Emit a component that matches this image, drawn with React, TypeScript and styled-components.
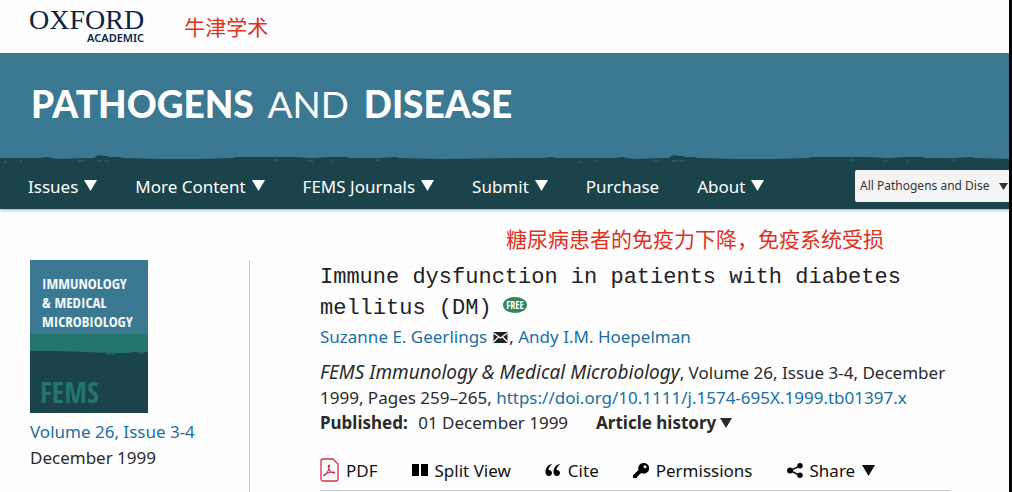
import React from 'react';
import styled, { createGlobalStyle } from 'styled-components';

const Global = createGlobalStyle`
  *, *::before, *::after { box-sizing: border-box; }
  html { background: #000; }
  body {
    margin: 0 3px 0 0;
    background: #fff;
    color: #2a2a2a;
    font-family: "Noto Sans", "Noto Sans CJK SC", sans-serif;
    font-size: 17px;
    line-height: 25px;
    overflow-x: hidden;
  }
  #root { min-height: 100vh; background: #fefefe; }
  a { color: #1a6f9f; text-decoration: none; }
  button { font: inherit; color: inherit; background: none; border: 0; padding: 0; cursor: pointer; }
  p, h1 { margin: 0; }
`;

const Header = styled.header`
  box-shadow: 0 1px 3px #8aa6ae;
`;

const Masthead = styled.div`
  display: flex;
  gap: 40px;
  height: 53px;
  padding: 4px 29px 0;
`;

const Logo = styled.a`
  display: flex;
  flex-direction: column;
  align-items: flex-end;
  color: #0b2545;
`;

const LogoName = styled.span`
  font: 28px/32px "Liberation Serif", serif;
`;

const LogoSub = styled.span`
  font: 600 11px/12px "Noto Sans", sans-serif;
  margin-top: -4px;
`;

const Note = styled.p`
  align-self: flex-start;
  color: #e0301e;
  font-family: "Noto Sans CJK SC", sans-serif;
  font-size: 21px;
  line-height: 28px;
`;

const MastheadNote = styled(Note)`
  padding-top: 8px;
`;

const Banner = styled.div`
  height: 98px;
  padding: 29px 31px 0;
  background: #3b7892;
`;

const Journal = styled.a`
  color: #fff;
  font: 900 37px/44px Lato, sans-serif;
  white-space: nowrap;
  span { margin: 0 6px 0 5px; font-weight: 400; }
`;

const Brush = styled.svg`
  display: block;
  width: 100%;
  height: 14px;
  background: #1b434b;
`;

const Nav = styled.nav`
  display: flex;
  align-items: flex-start;
  height: 44px;
  padding-left: 28px;
  background: #1b434b;
  color: #fff;
`;

const Menu = styled.div`
  display: flex;
  flex: 1;
  gap: 38px;
  padding-top: 9px;
`;

const MenuItem = styled.button`
  display: flex;
  align-items: center;
  gap: 6px;
  white-space: nowrap;
  svg { margin-bottom: 3px; }
`;

const Scope = styled.div`
  display: flex;
  align-items: center;
  width: 154px;
  height: 32px;
  margin-top: 5px;
  padding-right: 1px;
  border-radius: 2px 0 0 2px;
  background: #f4f4f5;
  color: #333;
`;

const ScopeSelect = styled.select`
  flex: 1;
  min-width: 0;
  padding: 0 0 0 5px;
  border: 0;
  background: none;
  color: inherit;
  font: 12px/20px "Noto Sans", sans-serif;
  appearance: none;
`;

const Content = styled.main`
  display: flex;
  align-items: flex-start;
  padding: 15px 59px 0 30px;
`;

const Issue = styled.aside`
  width: 220px;
  min-height: 232px;
  margin-top: 36px;
  border-right: 1px solid #c5c8d4;
  line-height: 26px;
`;

const Cover = styled.svg`
  display: block;
  width: 118px;
  height: 153px;
  margin-bottom: 6px;
  font-family: "Open Sans Condensed", "Noto Sans CJK SC", sans-serif;
`;

const Article = styled.article`
  flex: 1;
  min-width: 0;
  padding-left: 70px;
`;

const Centered = styled.div`
  padding-left: 186px;
`;

const Title = styled.h1`
  margin-top: 10px;
  font: 22px/31px "Liberation Mono", monospace;
  color: #222;
`;

const Free = styled.svg`
  width: 24px;
  height: 16px;
  margin-left: -2px;
  vertical-align: 1px;
`;

const Authors = styled.p`
  margin-bottom: 11px;
`;

const Mail = styled.svg`
  width: 15px;
  height: 11px;
  margin: 0 1px 0 6px;
`;

const Source = styled.em`
  font-size: 19px;
`;

const Dates = styled.div`
  display: flex;
  gap: 28px;
  b { margin-right: 6px; }
`;

const History = styled.button`
  display: flex;
  align-items: center;
  gap: 4px;
  font-weight: 700;
`;

const Tools = styled.div`
  display: flex;
  gap: 34px;
  margin-top: 19px;
  padding-bottom: 4px;
  border-bottom: 1px solid #c5c8d4;
  color: #111;
`;

const Tool = styled.button`
  display: flex;
  align-items: center;
  gap: 7px;
  height: 32px;
  white-space: nowrap;
`;

const Caret = ({ w = 13 }: { w?: number }) => (
  <svg width={w} height={w - 2} viewBox="0 0 12 11" preserveAspectRatio="none" aria-hidden="true">
    <path d="M0 0h12L6 11z" fill="currentColor" />
  </svg>
);

const menu: [string, boolean][] = [
  ['Issues', true],
  ['More Content', true],
  ['FEMS Journals', true],
  ['Submit', true],
  ['Purchase', false],
  ['About', true],
];

const PdfIcon = () => (
  <svg width="19" height="24" viewBox="0 0 19 24" fill="none" stroke="#d2304c" aria-hidden="true">
    <path d="M3 1h10l5 5v15a2 2 0 0 1-2 2H3a2 2 0 0 1-2-2V3a2 2 0 0 1 2-2z" strokeWidth="1.3" />
    <path d="M9 7c-1 0-1 2 0 4 1 3 3 4 5 4 1 0 1-1-1-1-3 0-6 1-8 2-2 2-1 2 0 1 2-2 4-6 4-8 1-1 1-2 0-2z" strokeWidth="1.1" />
  </svg>
);

const SplitIcon = () => (
  <svg width="16" height="12" viewBox="0 0 16 12" aria-hidden="true"><path d="M0 0h7v12H0zM9 0h7v12H9z" /></svg>
);

const QuoteIcon = () => (
  <svg width="16" height="12" viewBox="0 0 15 12" aria-hidden="true">
    <path d="M6 0C2 1 0 4 0 8c0 2 1 4 3.300 4C5 12 6.500 11 6.500 9S5 6 3 6c0-2 1-4 3-5zM14 0c-4 1-6 4-6 8 0 2 1 4 3.300 4 1.700 0 3.200-1 3.200-3S13 6 11 6c0-2 1-4 3-5z" />
  </svg>
);

const KeyIcon = () => (
  <svg width="16" height="15" viewBox="0 0 16 15" aria-hidden="true">
    <path fillRule="evenodd" d="M10.500 0a5.300 5.300 0 0 0-5 7L0 12.300V15h3.500l1-1.500L7 11l1.500-1A5.300 5.300 0 1 0 10.500 0zM12 2.300a1.500 1.500 0 1 1 0 3 1.500 1.500 0 0 1 0-3z" />
  </svg>
);

const ShareIcon = () => (
  <svg width="16" height="15" viewBox="0 0 16 15" aria-hidden="true">
    <path d="M13 3 3 7.500l10 5" fill="none" stroke="#111" strokeWidth="1.500" />
    <circle cx="3" cy="7.500" r="2.900" /><circle cx="13" cy="2.800" r="2.700" /><circle cx="13" cy="12.200" r="2.700" />
  </svg>
);

export default function App() {
  return (
    <>
      <Global />
      <Header>
        <Masthead>
          <Logo href="#">
            <LogoName>OXFORD</LogoName>
            <LogoSub>ACADEMIC</LogoSub>
          </Logo>
          <MastheadNote>牛津学术</MastheadNote>
        </Masthead>
        <Banner>
          <Journal href="#">PATHOGENS <span>AND</span> DISEASE</Journal>
        </Banner>
        <Brush aria-hidden="true">
          <defs>
            <pattern id="brush" width="575" height="14" patternUnits="userSpaceOnUse">
              <path fill="#3b7892" d="M0 0H575V7L556 7 553 6 540 7 515 7 440 8 400 7 396 6 378 7 350 7 347 6 330 6 312 7 294 6 270 6 236 6 232 7 200 8 160 8 125 7 112 6 98 6 94 7 85 7 60 8 51 7 48 6 38 7 10 7 0 7z" />
              <path fill="#1b434b" d="M95 7l1-2 4-1 3 1 4 0 3 1 10 0 3 2H96z" />
              <path stroke="#3b7892" opacity="0.7" d="M78 10h6M97 10h5M104 10h5M4 11h3M20 10h2M274 9h4M308 10h5M376 9h4M331 11h2" />
            </pattern>
          </defs>
          <rect width="100%" height="14" fill="url(#brush)" />
        </Brush>
        <Nav aria-label="Journal">
          <Menu>
            {menu.map(([label, drop]) => (
              <MenuItem key={label}>{label}{drop && <Caret />}</MenuItem>
            ))}
          </Menu>
          <Scope>
            <ScopeSelect aria-label="Search scope"><option>All Pathogens and Dise</option></ScopeSelect>
            <Caret w={9} />
          </Scope>
        </Nav>
      </Header>
      <Content>
        <Issue>
          <Cover viewBox="0 0 118 153" role="img" aria-label="Journal cover">
            <path fill="#3b7892" d="M0 0h118v75H0z" />
            <path fill="#24756c" d="M0 74h118v20H0z" />
            <path fill="#1b434b" d="M0 91l25 0 30 1 25 1 15 0 10-1 13 0v61H0z" />
            <path stroke="#24756c" d="M76 94h9M108 93h6" />
            <g fill="#f2f8fa" fontSize="15">
              <text x="12" y="29">IMMUNOLOGY</text>
              <text x="12" y="48">&amp; MEDICAL</text>
              <text x="12" y="67">MICROBIOLOGY</text>
            </g>
            <text x="10" y="143" fill="#24756c" fontWeight="700" fontSize="29">FEMS</text>
          </Cover>
          <a href="#">Volume 26, Issue 3-4</a>
          <p>December 1999</p>
        </Issue>
        <Article>
          <Centered><Note>糖尿病患者的免疫力下降，免疫系统受损</Note></Centered>
          <Title>
            Immune dysfunction in patients with diabetes mellitus (DM){' '}
            <Free viewBox="0 0 24 16" role="img" aria-label="Free">
              <ellipse cx="12" cy="8" rx="12" ry="8" fill="#35845a" />
              <text x="12" y="12" textAnchor="middle" fill="#fff" fontFamily="Open Sans Condensed, sans-serif" fontWeight="700" fontSize="10">FREE</text>
            </Free>
          </Title>
          <Authors>
            <a href="#">Suzanne E. Geerlings</a>
            <Mail viewBox="0 0 14 11" role="img" aria-label="Email">
              <path fill="#222" d="M0 0h14v11H0z" />
              <path d="M0 1l7 5 7-5M0 10l5-5M14 10L9 5" fill="none" stroke="#fff" strokeWidth="1.200" />
            </Mail>
            , <a href="#">Andy I.M. Hoepelman</a>
          </Authors>
          <p>
            <Source>FEMS Immunology &amp; Medical Microbiology</Source>, Volume 26, Issue 3-4, December 1999, Pages 259–265,{' '}
            <a href="#">https://doi.org/10.1111/j.1574-695X.1999.tb01397.x</a>
          </p>
          <Dates>
            <span><b>Published:</b> 01 December 1999</span>
            <History>Article history<Caret w={12} /></History>
          </Dates>
          <Tools>
            <Tool><PdfIcon />PDF</Tool>
            <Tool><SplitIcon />Split View</Tool>
            <Tool><QuoteIcon />Cite</Tool>
            <Tool><KeyIcon />Permissions</Tool>
            <Tool><ShareIcon />Share<Caret /></Tool>
          </Tools>
        </Article>
      </Content>
    </>
  );
}
